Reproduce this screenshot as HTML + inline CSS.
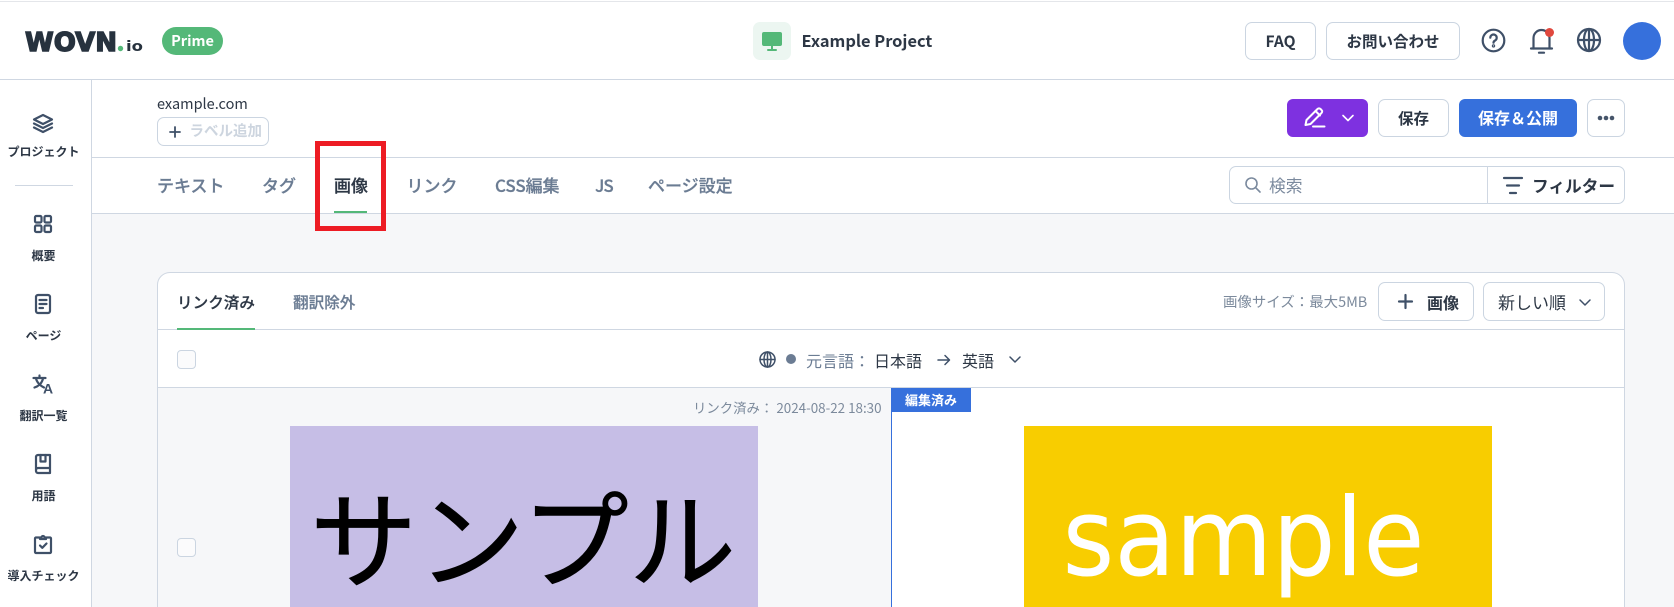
<!DOCTYPE html>
<html lang="ja"><head><meta charset="utf-8"><title>WOVN.io</title>
<style>
html,body{margin:0;padding:0;width:1674px;height:607px;overflow:hidden;background:#fff}
body{position:relative;font-family:"Noto Sans CJK JP","Liberation Sans",sans-serif;color:#2d3745}
.a{position:absolute}
.t{position:absolute;white-space:nowrap;line-height:20px;height:20px}
.btn{position:absolute;box-sizing:border-box;border:1px solid #cbd5e1;border-radius:7px;background:#fff;text-align:center;font-weight:700;font-size:15.5px;line-height:36px;color:#2d3745;white-space:nowrap}
.ln{position:absolute;background:#cfd7e2}
.tab{position:absolute;top:175px;font-size:17px;line-height:20px;height:20px;color:#6b7c93;font-weight:500;white-space:nowrap;-webkit-text-stroke:.25px #6b7c93}
.side{position:absolute;left:0;width:87px;text-align:center;font-size:12px;font-weight:700;line-height:16px;color:#2d3745;white-space:nowrap}
svg{position:absolute;overflow:visible}
.ic{fill:none;stroke:#3f5068;stroke-width:2.2;stroke-linecap:round;stroke-linejoin:round}
.cb{position:absolute;box-sizing:border-box;width:19px;height:19px;border:1px solid #cbd5e1;border-radius:4px;background:#fbfbfc}
</style></head><body>

<!-- structure -->
<div class="ln" style="left:0;top:1px;width:1674px;height:1px;background:#e4e6ea"></div>
<div class="ln" style="left:0;top:79px;width:1674px;height:1px"></div>
<div class="ln" style="left:91px;top:79px;width:1px;height:528px"></div>
<div class="ln" style="left:92px;top:157px;width:1582px;height:1px"></div>
<div class="a" style="left:92px;top:214px;width:1582px;height:393px;background:#f6f7f9"></div>
<div class="ln" style="left:92px;top:213px;width:1582px;height:1px"></div>

<!-- header -->
<svg style="left:0;top:0" width="160" height="70">
<text x="25" y="51" font-family="'DejaVu Sans',sans-serif" font-weight="700" font-size="26" textLength="92" lengthAdjust="spacingAndGlyphs" fill="#27323e" stroke="#27323e" stroke-width="1.4">WOVN</text>
<circle cx="120.5" cy="48.5" r="2.7" fill="#54b878"/>
<text x="126" y="51" font-family="'DejaVu Sans',sans-serif" font-weight="700" font-size="14" textLength="17" lengthAdjust="spacingAndGlyphs" fill="#27323e">io</text>
</svg>
<div class="a" style="left:162px;top:27px;width:61px;height:28px;border-radius:14px;background:#54b878;color:#fff;font-size:14.5px;font-weight:700;text-align:center;line-height:27px">Prime</div>

<div class="a" style="left:753px;top:22px;width:38px;height:38px;border-radius:7px;background:#ecf6f1"></div>
<svg style="left:753px;top:22px" width="38" height="38"><rect x="9" y="10" width="20" height="14" rx="2" fill="#54b878"/><rect x="18" y="24" width="2" height="3" fill="#54b878"/><rect x="14" y="27" width="10" height="2" rx="1" fill="#54b878"/></svg>
<div class="t" style="left:801.5px;top:29.5px;font-size:16.4px;font-weight:700;color:#2d3745">Example Project</div>

<div class="btn" style="left:1245px;top:22px;width:71px;height:38px">FAQ</div>
<div class="btn" style="left:1326px;top:22px;width:134px;height:38px">お問い合わせ</div>

<svg class="ic" style="left:1482px;top:29px" width="24" height="24"><circle cx="11.500" cy="11.500" r="10.800"/><path d="M8.300 8.700a3.200 3.200 0 1 1 4.800 2.800c-1 .6-1.600 1.100-1.600 2.200"/><circle cx="11.500" cy="16.900" r=".6"/></svg>
<svg class="ic" style="left:1529px;top:28px" width="24" height="26"><path d="M2 20.500h21"/><path d="M4.500 20.500V10a8 8 0 0 1 16 0v10.500"/><path d="M10 24.700h5"/></svg>
<div class="a" style="left:1545px;top:28px;width:9px;height:9px;border-radius:50%;background:#e0483e"></div>
<svg class="ic" style="left:1577px;top:28px" width="24" height="24"><circle cx="12" cy="12" r="11"/><ellipse cx="12" cy="12" rx="5" ry="11"/><path d="M1 12h22"/><path d="M12 1v22"/></svg>
<div class="a" style="left:1623px;top:22px;width:38px;height:38px;border-radius:50%;background:#3670dc"></div>

<!-- sidebar -->
<svg class="ic" style="left:33px;top:114px" width="20" height="19"><path d="M10 1l9 4.500-9 4.500-9-4.500z"/><path d="M1 9.500l9 4.500 9-4.500"/><path d="M1 13.500l9 4.500 9-4.500"/></svg>
<div class="side" style="top:144px">プロジェクト</div>
<div class="ln" style="left:15px;top:185px;width:58px;height:1px"></div>

<svg class="ic" style="left:34px;top:215px" width="18" height="18"><rect x="1" y="1" width="6.500" height="6.500" rx="1.300"/><rect x="10.500" y="1" width="6.500" height="6.500" rx="1.300"/><rect x="1" y="10.500" width="6.500" height="6.500" rx="1.300"/><rect x="10.500" y="10.500" width="6.500" height="6.500" rx="1.300"/></svg>
<div class="side" style="top:248px">概要</div>

<svg class="ic" style="left:35px;top:294px" width="16" height="20"><rect x="1" y="1" width="14" height="18" rx="2"/><path d="M4.500 6h7M4.500 10h7M4.500 14h3.500"/></svg>
<div class="side" style="top:328px">ページ</div>

<svg style="left:32px;top:374px" width="22" height="20"><path class="ic" d="M1.500 4h12M7.500 1.500V4M11 4.500C10 9 7 12 2.500 13.500M4 4.500c1 4 4 7 8 9"/><text x="11" y="19.500" font-family="'Liberation Sans',sans-serif" font-weight="700" font-size="14" fill="#3f5068">A</text></svg>
<div class="side" style="top:408px">翻訳一覧</div>

<svg class="ic" style="left:35px;top:454px" width="16" height="20"><path d="M1 16V3a2 2 0 0 1 2-2h12v18H3a2 2 0 0 1-2-2v-1a2 2 0 0 1 2-2h12"/><path d="M5.500 1v6.500h5V1"/></svg>
<div class="side" style="top:488px">用語</div>

<svg class="ic" style="left:34px;top:534px" width="18" height="20"><path d="M5.500 3.500H2a1 1 0 0 0-1 1V18a1 1 0 0 0 1 1h14a1 1 0 0 0 1-1V4.500a1 1 0 0 0-1-1h-3.500"/><path d="M6 5V3.500h1.500a1.500 1.500 0 0 1 3 0H12V5z"/><path d="M6 11.500l2.300 2.300L12.500 9.500"/></svg>
<div class="side" style="top:568px">導入チェック</div>

<!-- sub header -->
<div class="t" style="left:157px;top:94px;font-size:14.5px;color:#2d3745">example.com</div>
<div class="a" style="left:157px;top:117px;width:112px;height:29px;box-sizing:border-box;border:1px solid #cbd5e1;border-radius:7px"></div>
<svg class="ic" style="left:169px;top:126px" width="12" height="12"><path d="M6 1v10M1 6h10" stroke-width="1.800"/></svg>
<div class="t" style="left:189.500px;top:121px;font-size:14.500px;font-weight:700;color:#cdd5df">ラベル追加</div>

<div class="a" style="left:1287px;top:99px;width:81px;height:38px;border-radius:6px;background:#7e31e0"></div>
<svg style="left:1304px;top:107px;fill:none;stroke:#fff;stroke-width:2;stroke-linecap:round;stroke-linejoin:round" width="22" height="22"><path d="M1.500 18l1-5L13.500 2a2 2 0 0 1 3 0l1 1a2 2 0 0 1 0 3L6.500 17z"/><path d="M11.500 4l4.500 4.500"/><path d="M9 19.500h11.500"/></svg>
<svg style="left:1342px;top:114px;fill:none;stroke:#fff;stroke-width:1.600;stroke-linecap:round;stroke-linejoin:round" width="12" height="8"><path d="M1 1.500l5 5 5-5"/></svg>
<div class="btn" style="left:1378px;top:99px;width:71px;height:38px">保存</div>
<div class="a" style="left:1459px;top:99px;width:118px;height:38px;border-radius:6px;background:#3670dc;color:#fff;font-size:16px;font-weight:700;text-align:center;line-height:37px;white-space:nowrap">保存＆公開</div>
<div class="btn" style="left:1587px;top:99px;width:38px;height:38px"></div>
<svg style="left:1597px;top:115px" width="20" height="6"><circle cx="3" cy="3" r="2.300" fill="#46556a"/><circle cx="9" cy="3" r="2.300" fill="#46556a"/><circle cx="15" cy="3" r="2.300" fill="#46556a"/></svg>

<!-- tabs -->
<div class="tab" style="left:157px">テキスト</div>
<div class="tab" style="left:262px">タグ</div>
<div class="tab" style="left:334px;color:#2d3745;-webkit-text-stroke:.25px #2d3745">画像</div>
<div class="a" style="left:334px;top:211px;width:33px;height:2px;background:#54b878"></div>
<div class="tab" style="left:406.500px">リンク</div>
<div class="tab" style="left:495px;letter-spacing:-.1px">CSS編集</div>
<div class="tab" style="left:595px;letter-spacing:-1px">JS</div>
<div class="tab" style="left:648px">ページ設定</div>
<div class="a" style="left:315px;top:141px;width:71px;height:90px;box-sizing:border-box;border:5px solid #ed1c24;z-index:5"></div>

<!-- search/filter -->
<div class="a" style="left:1229px;top:166px;width:396px;height:38px;box-sizing:border-box;border:1px solid #cbd5e1;border-radius:7px;background:#fff"></div>
<div class="ln" style="left:1487px;top:166px;width:1px;height:38px"></div>
<svg style="left:1245px;top:177px;fill:none;stroke:#7b8a9e;stroke-width:1.600;stroke-linecap:round" width="16" height="16"><circle cx="6.500" cy="6.500" r="5.500"/><path d="M10.800 10.800L15 15"/></svg>
<div class="t" style="left:1269px;top:175px;font-size:16.800px;color:#7b8a9e">検索</div>
<svg class="ic" style="left:1503px;top:176px" width="20" height="19"><path d="M1 2h18M4 9.500h12M7 17h6"/></svg>
<div class="t" style="left:1532px;top:175px;font-size:16.700px;font-weight:700;color:#2d3745">フィルター</div>

<!-- panel -->
<div class="a" style="left:157px;top:272px;width:1468px;height:340px;box-sizing:border-box;border:1px solid #cfd7e2;border-radius:13px 13px 0 0;background:#fff"></div>
<div class="ln" style="left:158px;top:329px;width:1466px;height:1px"></div>
<div class="t" style="left:177px;top:292px;font-size:15.600px;font-weight:500;color:#2d3745;-webkit-text-stroke:.2px #2d3745">リンク済み</div>
<div class="a" style="left:177px;top:328px;width:78px;height:2px;background:#54b878"></div>
<div class="t" style="left:293px;top:292px;font-size:15.600px;font-weight:500;color:#6b7c93;-webkit-text-stroke:.2px #6b7c93">翻訳除外</div>

<div class="t" style="left:1223px;top:292px;font-size:14.450px;color:#7c8a9c">画像サイズ：最大5MB</div>
<div class="a" style="left:1378px;top:282px;width:96px;height:39px;box-sizing:border-box;border:1px solid #cbd5e1;border-radius:7px"></div>
<svg class="ic" style="left:1398px;top:294px" width="15" height="15"><path d="M7.500 1v13M1 7.500h13"/></svg>
<div class="t" style="left:1427px;top:291.500px;font-size:16px;font-weight:700;color:#2d3745">画像</div>
<div class="a" style="left:1483px;top:282px;width:122px;height:39px;box-sizing:border-box;border:1px solid #cbd5e1;border-radius:7px"></div>
<div class="t" style="left:1498px;top:291.500px;font-size:17px;color:#2d3745">新しい順</div>
<svg style="left:1579px;top:299px;fill:none;stroke:#3f5068;stroke-width:1.500;stroke-linecap:round;stroke-linejoin:round" width="12" height="8"><path d="M1 1l5 5 5-5"/></svg>

<div class="cb" style="left:177px;top:350px"></div>
<svg class="ic" style="left:759px;top:351px" width="17" height="17"><circle cx="8.500" cy="8.500" r="7.500" stroke-width="1.500"/><ellipse cx="8.500" cy="8.500" rx="3.500" ry="7.500" stroke-width="1.500"/><path d="M1 8.500h15M8.500 1v15" stroke-width="1.500"/></svg>
<div class="a" style="left:786px;top:354px;width:10px;height:10px;border-radius:50%;background:#6b7c93"></div>
<div class="t" style="left:806px;top:350px;font-size:16px;color:#6b7c93">元言語：</div>
<div class="t" style="left:874px;top:350px;font-size:16px;color:#2d3745">日本語</div>
<svg style="left:937px;top:354px;fill:none;stroke:#3f5068;stroke-width:1.500;stroke-linecap:round;stroke-linejoin:round" width="14" height="12"><path d="M1 6h11M8 1.500L12.500 6 8 10.500"/></svg>
<div class="t" style="left:962px;top:350px;font-size:16px;color:#2d3745">英語</div>
<svg style="left:1009px;top:356px;fill:none;stroke:#3f5068;stroke-width:1.500;stroke-linecap:round;stroke-linejoin:round" width="12" height="8"><path d="M1 1l5 5 5-5"/></svg>

<div class="ln" style="left:158px;top:387px;width:1466px;height:1px"></div>
<div class="a" style="left:158px;top:388px;width:733px;height:219px;background:#f6f7f9"></div>
<div class="a" style="left:891px;top:388px;width:1px;height:219px;background:#3670dc"></div>
<div class="a" style="left:891px;top:388px;width:80px;height:24px;background:#3670dc;color:#fff;font-size:13px;font-weight:700;text-align:center;line-height:23px">編集済み</div>
<div class="t" style="left:693px;top:397px;font-size:13.400px;color:#7c8a9c">リンク済み： 2024-08-22 18:30</div>

<div class="cb" style="left:177px;top:538px"></div>

<div class="a" style="left:290px;top:426px;width:468px;height:181px;background:#c6bee6;overflow:hidden"></div>
<svg style="left:0;top:0" width="1674" height="607">
<text x="310" y="580" font-family="'Noto Sans CJK JP',sans-serif" font-size="106" textLength="426" lengthAdjust="spacingAndGlyphs" fill="#000" stroke="#000" stroke-width=".8">サンプル</text>
</svg>
<div class="a" style="left:1024px;top:426px;width:468px;height:181px;background:#f8cd00"></div>
<svg style="left:0;top:0" width="1674" height="607">
<text x="1062.500" y="575" font-family="'DejaVu Sans',sans-serif" font-size="108" textLength="362" lengthAdjust="spacingAndGlyphs" fill="#fff">sample</text>
</svg>
</body></html>
